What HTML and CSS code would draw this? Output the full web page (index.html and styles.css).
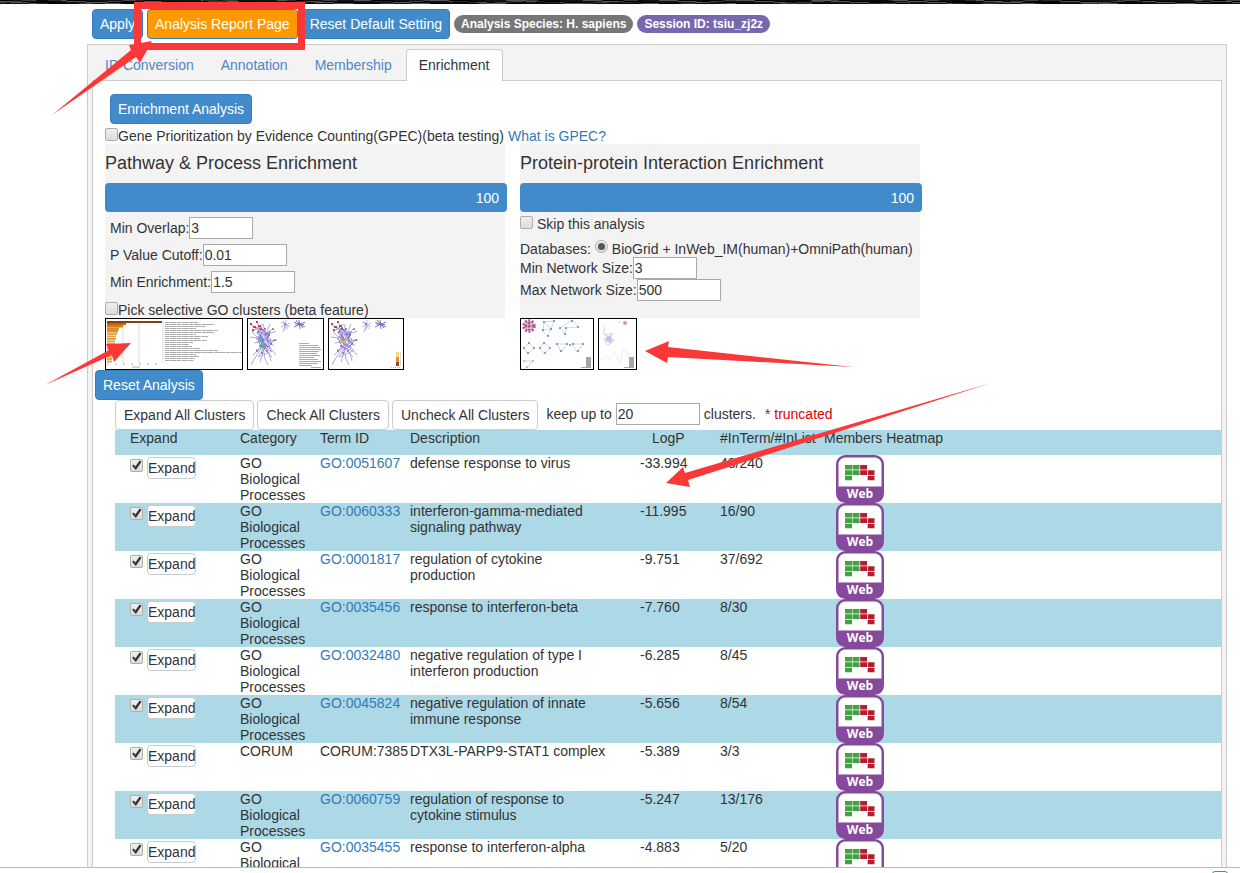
FILE: index.html
```html
<!DOCTYPE html>
<html lang="en">
<head>
<meta charset="utf-8">
<title>Enrichment Analysis</title>
<link rel="stylesheet" href="styles.css">
</head>
<body>
<svg class="defs" width="0" height="0" aria-hidden="true">
  <symbol id="web" viewBox="0 0 48 48">
    <rect x="1.250" y="1.250" width="45.500" height="45.500" rx="8" fill="#fff" stroke="#854a9b" stroke-width="2.500"/>
    <path d="M1 31.500H47V39Q47 47 39 47H9Q1 47 1 39Z" fill="#854a9b"/>
    <path d="M9 10h7v4.500h-7zM16.500 10h7v4.500h-7zM9 15.200h7v4.700h-7zM16.500 15.200h7v4.700h-7zM9 20.700h7v4.600h-7z" fill="#43a343"/>
    <path d="M24.200 10h6.800v4.500h-6.800zM24.200 15.200h6.800v4.700h-6.800zM31.700 15.200h6.800v4.700h-6.800zM31.700 20.700h6.800v4.600h-6.800z" fill="#b81c30"/>
    <text x="24" y="43" text-anchor="middle" class="web-text">Web</text>
  </symbol>
  <symbol id="net" viewBox="0 0 76 50">
    <g fill="none" stroke="#a99ddb" stroke-width=".9">
      <path d="M3 6L20 14L9 18L26 22L12 28L24 32L10 38L18 26L4 13L15 5L22 30L8 20L28 12M12 10L17 40L20 46M6 24L16 22L29 21M14 28L5 42L3 46M16 28L8 31M20 26L28 36M10 4L13 24L24 10M14 14L26 27M5 36L20 22M12 43L16 30L24 38M22 5L16 20L2 18M21 34L23 42M7 9L23 20L13 33"/>
      <path d="M13 8L17 16L22 12L19 22L24 24L18 30L13 27L10 22L15 19L9 14ZM15 10L20 18L14 24L20 28L12 18Z" stroke="#8173c5"/>
      <path d="M33 3L42 8M38 1L37 11M33 8L42 4M35 2L40 10M37 7L35 13" stroke="#b9a9df"/>
      <path d="M46 3L57 8M51 1L52 10M46 8L57 3M48 1L55 9M47 5L56 5.500" stroke="#7464c4"/>
    </g>
    <path d="M9 13h2M16 10h2M20 16h2M14 21h2M11 27h2M22 25h2M18 32h2M26 21h2M24 10h2M13 34h2M8 32h2M50 5h3M36 5h2" stroke="#7767b8" stroke-width="1.500"/>
  </symbol>
</svg>

<div class="banner"></div>
<main class="page">
  <div class="toolbar">
    <button class="btn primary" type="button">Apply</button>
    <button class="btn report" type="button">Analysis Report Page</button>
    <button class="btn primary" type="button">Reset Default Setting</button>
    <span class="badge">Analysis Species: H. sapiens</span>
    <span class="badge session">Session ID: tsiu_zj2z</span>
  </div>
  <section class="tabbox">
    <nav class="tabs">
      <a href="#">ID Conversion</a>
      <a href="#">Annotation</a>
      <a href="#">Membership</a>
      <a href="#" class="active">Enrichment</a>
    </nav>
    <div class="content">
      <div class="start"><button class="btn primary" type="button">Enrichment Analysis</button></div>
      <div class="check gpec"><input type="checkbox" id="gpec"><label for="gpec">Gene Prioritization by Evidence Counting(GPEC)(beta testing)</label><a href="#">What is GPEC?</a></div>
      <div class="panels">
        <section class="column">
          <div class="panel">
            <h2>Pathway &amp; Process Enrichment</h2>
            <div class="bar">100</div>
            <div class="fields">
              <div class="field"><label for="overlap">Min Overlap:</label><input class="box short" id="overlap" value="3"></div>
              <div class="field"><label for="cutoff">P Value Cutoff:</label><input class="box" id="cutoff" value="0.01"></div>
              <div class="field"><label for="enrich">Min Enrichment:</label><input class="box" id="enrich" value="1.5"></div>
            </div>
            <div class="check pick"><input type="checkbox" id="pick"><label for="pick">Pick selective GO clusters (beta feature)</label></div>
          </div>
          <div class="thumbs">
            <svg width="138" height="52" viewBox="0 0 138 52" role="img" aria-label="Bar chart">
              <path d="M18 3V45M34 3V45M58 3V45" stroke="#ddd"/>
              <path d="M2 3H57V5H2Z" fill="#8c3d12"/>
              <path d="M2 5H21V7H2Z" fill="#bd650f"/><path d="M2 7H18V9.500H2Z" fill="#d97c16"/>
              <path d="M2 9.500H14V12H2ZM2 12H13V14.500H2Z" fill="#e18b24"/>
              <path d="M2 16H12M2 18.500H11M2 21H11M2 23.500H10M2 26H10M2 28.500H9M2 31H9M2 33.500H8M2 36H8M2 38.500H8M2 41H7M2 43.500H7" stroke="#e6a646" stroke-width="2"/>
              <path d="M2 46H58" stroke="#aaa" stroke-dasharray="2 6"/><path d="M27 49h8" stroke="#aaa"/>
              <g stroke="#858585" stroke-width="1" stroke-dasharray="4 .5 7 .7">
                <path d="M60 4.500h33M60 6.500h50M60 8.500h41M60 10.500h31M60 12.500h53M60 14.500h50M60 16.500h31M60 18.500h43M60 20.500h35M60 22.500h42M60 24.500h28M60 26.500h24M60 28.500h27M60 30.500h35M60 32.500h53M60 34.500h77M60 36.500h31M60 38.500h34M60 40.500h30M60 42.500h29" opacity=".7"/>
              </g>
              <rect x=".5" y=".5" width="137" height="51" fill="none" stroke="#000"/>
            </svg>
            <svg width="77" height="52" viewBox="0 0 77 52" role="img" aria-label="Network coloured by cluster">
              <use href="#net" x="1" y="1" width="76" height="50"/>
              <path d="M3 6h2M6 9h3M9 4h2M11 8h3M5 12h2M13 11h2" stroke="#db3158" stroke-width="2"/>
              <path d="M11 20l5 4-2 4 5 1" fill="none" stroke="#53a7a1" stroke-width="2"/>
              <path d="M52 25.500h10M52 27.500h19M52 29.500h21M52 31.500h22M52 33.500h20M52 35.500h18M52 37.500h21M52 39.500h15M52 41.500h19M52 43.500h22M52 45.500h19M52 47.500h13M64 49.500h10" stroke="#aaa"/>
              <rect x=".5" y=".5" width="76" height="51" fill="none" stroke="#000"/>
            </svg>
            <svg width="76" height="52" viewBox="0 0 76 52" role="img" aria-label="Network coloured by p-value">
              <use href="#net" x="1" y="1" width="76" height="50"/>
              <path d="M3 6h2M6 9h3M9 4h2M11 8h3M5 12h2M13 11h2" stroke="#944f65" stroke-width="2"/>
              <path d="M12 20l3 4 3-2" fill="none" stroke="#dfb367" stroke-width="2"/>
              <path d="M68 34h3v5h-3z" fill="#f7d77d"/><path d="M68 39h3v5h-3z" fill="#eb9135"/><path d="M68 44h3v4h-3z" fill="#a54120"/>
              <path d="M72.500 34v14M63 49.500h10" stroke="#bbb" stroke-dasharray="1 1"/>
              <rect x=".5" y=".5" width="75" height="51" fill="none" stroke="#000"/>
            </svg>
          </div>
        </section>
        <section class="column">
          <div class="panel">
            <h2>Protein-protein Interaction Enrichment</h2>
            <div class="bar">100</div>
            <div class="check skip"><input type="checkbox" id="skip"><label for="skip">Skip this analysis</label></div>
            <div class="databases"><span>Databases:</span><input type="radio" id="db" name="db" checked><label for="db">BioGrid + InWeb_IM(human)+OmniPath(human)</label></div>
            <div class="field"><label for="minnet">Min Network Size:</label><input class="box short" id="minnet" value="3"></div>
            <div class="field"><label for="maxnet">Max Network Size:</label><input class="box" id="maxnet" value="500"></div>
          </div>
          <div class="thumbs">
            <svg width="74" height="52" viewBox="0 0 74 52" role="img" aria-label="Interaction components">
              <circle cx="9" cy="8" r="5" fill="#dbb5cf"/>
              <g fill="none" stroke="#b3508a" stroke-width="2.500" stroke-dasharray="2 1.500"><circle cx="9" cy="8" r="5.500"/><path d="M5 8h9M9 4v8"/></g>
              <g fill="none" stroke="#b7c5e5" stroke-width=".7"><path d="M24 4L34 3L31 11L23 12ZM24 4L31 11L28 18L22 13M40 10L52 2L58 9L46 10L45 17ZM4 30L9 25L14 30L8 36ZM19 30L25 25L30 30L24 35ZM37 26L47 26L41 34ZM52 26L63 26L57 34ZM3 43L13 43L7 50"/></g>
              <path d="M23 4h2M33 3h2M30 11h2M22 12h2M27 18h2M39 10h2M51 3h2M57 9h2M45 10h2M44 16h2M3 30h2M8 25h2M13 30h2M7 35h2M23 25h2M36 26h2M46 26h2M40 33h2M52 26h2M62 26h2M57 33h2M49 27h2" stroke="#6287a5" stroke-width="1.500"/>
              <path d="M19 30h2M29 30h2M24 35h2" stroke="#ba7299" stroke-width="1.500"/><path d="M3 43h2M12 43h2M6 49h2" stroke="#9dc6a9" stroke-width="1.500"/>
              <path d="M66 39h5v11h-5zM61 49h8v1h-8z" fill="#aaa5a0"/>
              <rect x=".5" y=".5" width="73" height="51" fill="none" stroke="#000"/>
            </svg>
            <svg width="39" height="52" viewBox="0 0 39 52" role="img" aria-label="Interaction network">
              <path d="M5 7l2 5-2 3 5 5 4-5-2 6 5 1-6 3-5-5 3 7 5-2-3-6-5-3 9 0" fill="none" stroke="#c9ccec" stroke-width=".8"/>
              <circle cx="11" cy="21" r="3" fill="#bfc8ea"/><circle cx="27" cy="5" r="2" fill="#d698b4"/><path d="M21 4h2" stroke="#e6c2d1"/>
              <path d="M3 42q4-7 7-2t5-2 5 3 4-3 4-3 3-2" fill="none" stroke="#e4e4e4" stroke-dasharray="2 1"/>
              <path d="M31 39h5v11h-5zM26 49h8v1h-8z" fill="#aaa5a0"/>
              <rect x=".5" y=".5" width="38" height="51" fill="none" stroke="#000"/>
            </svg>
          </div>
        </section>
      </div>
      <div class="reset"><button class="btn primary" type="button">Reset Analysis</button></div>
      <div class="results">
        <div class="actions">
          <button class="btn plain" type="button">Expand All Clusters</button>
          <button class="btn plain" type="button">Check All Clusters</button>
          <button class="btn plain" type="button">Uncheck All Clusters</button>
          <div class="keep"><label for="keep">keep up to</label><input class="box" id="keep" value="20"><span>clusters.</span><span class="warn">* truncated</span></div>
        </div>
        <table>
          <colgroup><col class="c-expand"><col class="c-cat"><col class="c-term"><col class="c-desc"><col class="c-logp"><col class="c-count"><col></colgroup>
          <thead>
            <tr><th class="first">Expand</th><th>Category</th><th>Term ID</th><th>Description</th><th class="logp">LogP</th><th>#InTerm/#InList</th><th class="heat">Members Heatmap</th></tr>
          </thead>
          <tbody>
            <tr><td><div class="pickrow"><input type="checkbox" aria-label="Select GO:0051607" checked><button class="mini" type="button">Expand</button></div></td><td>GO Biological Processes</td><td><a href="#">GO:0051607</a></td><td class="desc">defense response to virus</td><td>-33.994</td><td>43/240</td><td class="icon"><svg role="img" aria-label="Web heatmap"><use href="#web"/></svg></td></tr>
            <tr><td><div class="pickrow"><input type="checkbox" aria-label="Select GO:0060333" checked><button class="mini" type="button">Expand</button></div></td><td>GO Biological Processes</td><td><a href="#">GO:0060333</a></td><td class="desc">interferon-gamma-mediated signaling pathway</td><td>-11.995</td><td>16/90</td><td class="icon"><svg role="img" aria-label="Web heatmap"><use href="#web"/></svg></td></tr>
            <tr><td><div class="pickrow"><input type="checkbox" aria-label="Select GO:0001817" checked><button class="mini" type="button">Expand</button></div></td><td>GO Biological Processes</td><td><a href="#">GO:0001817</a></td><td class="desc">regulation of cytokine production</td><td>-9.751</td><td>37/692</td><td class="icon"><svg role="img" aria-label="Web heatmap"><use href="#web"/></svg></td></tr>
            <tr><td><div class="pickrow"><input type="checkbox" aria-label="Select GO:0035456" checked><button class="mini" type="button">Expand</button></div></td><td>GO Biological Processes</td><td><a href="#">GO:0035456</a></td><td class="desc">response to interferon-beta</td><td>-7.760</td><td>8/30</td><td class="icon"><svg role="img" aria-label="Web heatmap"><use href="#web"/></svg></td></tr>
            <tr><td><div class="pickrow"><input type="checkbox" aria-label="Select GO:0032480" checked><button class="mini" type="button">Expand</button></div></td><td>GO Biological Processes</td><td><a href="#">GO:0032480</a></td><td class="desc">negative regulation of type I interferon production</td><td>-6.285</td><td>8/45</td><td class="icon"><svg role="img" aria-label="Web heatmap"><use href="#web"/></svg></td></tr>
            <tr><td><div class="pickrow"><input type="checkbox" aria-label="Select GO:0045824" checked><button class="mini" type="button">Expand</button></div></td><td>GO Biological Processes</td><td><a href="#">GO:0045824</a></td><td class="desc">negative regulation of innate immune response</td><td>-5.656</td><td>8/54</td><td class="icon"><svg role="img" aria-label="Web heatmap"><use href="#web"/></svg></td></tr>
            <tr><td><div class="pickrow"><input type="checkbox" aria-label="Select CORUM:7385" checked><button class="mini" type="button">Expand</button></div></td><td>CORUM</td><td>CORUM:7385</td><td class="desc">DTX3L-PARP9-STAT1 complex</td><td>-5.389</td><td>3/3</td><td class="icon"><svg role="img" aria-label="Web heatmap"><use href="#web"/></svg></td></tr>
            <tr><td><div class="pickrow"><input type="checkbox" aria-label="Select GO:0060759" checked><button class="mini" type="button">Expand</button></div></td><td>GO Biological Processes</td><td><a href="#">GO:0060759</a></td><td class="desc">regulation of response to cytokine stimulus</td><td>-5.247</td><td>13/176</td><td class="icon"><svg role="img" aria-label="Web heatmap"><use href="#web"/></svg></td></tr>
            <tr><td><div class="pickrow"><input type="checkbox" aria-label="Select GO:0035455" checked><button class="mini" type="button">Expand</button></div></td><td>GO Biological Processes</td><td><a href="#">GO:0035455</a></td><td class="desc">response to interferon-alpha</td><td>-4.883</td><td>5/20</td><td class="icon"><svg role="img" aria-label="Web heatmap"><use href="#web"/></svg></td></tr>
          </tbody>
        </table>
      </div>
    </div>
  </section>
</main>
<footer class="status"><span class="handle"></span></footer>

<svg class="marks" width="1000" height="500" viewBox="0 0 1000 500" aria-hidden="true">
  <rect x="137.500" y="5.500" width="164" height="41" fill="none" stroke="#fb3838" stroke-width="7"/>
  <g fill="#fb3838">
    <path d="M52 115L131 50L129 45L152 41L140 63L136 57Z"/>
    <path d="M45 385L109 350L106 344L131 343L114 362L112 355Z"/>
    <path d="M853 367L668 347L669 341L645 351L667 363L668 357Z"/>
    <path d="M991 383L685 473L683 467L666 483L690 487L688 480Z"/>
  </g>
</svg>
</body>
</html>
```
FILE: styles.css
```css
* { box-sizing: border-box; }

body {
  margin: 0;
  height: 100vh;
  display: flex;
  flex-direction: column;
  overflow: hidden;
  background: #fff;
  color: #333;
  font: 14px/16px "Liberation Sans", Arial, sans-serif;
}

a { color: #337ab7; text-decoration: none; }
button, input { font: inherit; color: inherit; margin: 0; }
.defs { display: none; }

.banner {
  flex: none;
  height: 4px;
  background:
    repeating-linear-gradient(176deg, transparent 0 2px, #6668 2px 3px, transparent 3px 7px),
    repeating-linear-gradient(94deg, transparent 0 37px, #0008 37px 61px, transparent 61px 83px),
    repeating-linear-gradient(3deg, #111 0 2px, #555 2px 3px, #000 3px 4px);
}

.page {
  flex: 1;
  min-height: 0;
  overflow: hidden;
  display: flex;
  flex-direction: column;
  padding: 5px 13px 0 87px;
}

.toolbar {
  flex: none;
  display: flex;
  align-items: center;
  gap: 4px;
  padding: 0 5px;
  margin-bottom: 5px;
}

.btn {
  height: 30px;
  padding: 0 7px;
  border: 1px solid #357ebd;
  border-radius: 4px;
  white-space: nowrap;
}
.primary { background: #428bca; color: #fff; }
.report { background: #f90; color: #fff; }
.plain { padding: 0 8px; background: #fff; border-color: #ccc; }

.badge {
  padding: 1px 7px;
  border-radius: 9px;
  background: #777;
  color: #fff;
  font-size: 12px;
  font-weight: bold;
}
.session { background: #7768ae; }

.tabbox {
  flex: 1;
  display: flex;
  flex-direction: column;
  padding: 4px 4px 0;
  border: 1px solid #ccc;
  border-bottom: 0;
  background: #f3f3f3;
}

.tabs { display: flex; gap: 1px; }
.tabs a {
  padding: 7px 12px;
  border: 1px solid transparent;
  border-bottom: 0;
  border-radius: 4px 4px 0 0;
  color: #4f86c6;
}
.tabs .active {
  position: relative;
  z-index: 1;
  margin-bottom: -1px;
  border-color: #ccc;
  background: #fff;
  color: #333;
}

.content {
  flex: 1;
  border: 1px solid #ccc;
  border-bottom: 0;
  background: #fff;
  padding: 13px 0 0 2px;
}

.start { display: flex; padding-left: 15px; margin-bottom: 4px; }

input[type="checkbox"], input[type="radio"] {
  appearance: none;
  flex: none;
  width: 13px;
  height: 13px;
  border: 1px solid #adadad;
  border-radius: 2px;
  background: linear-gradient(#eee, #dcdcdc);
}
input[type="radio"] { border-radius: 50%; padding: 2px; }
input[type="radio"]::before {
  content: "";
  display: block;
  width: 7px;
  height: 7px;
  border-radius: 50%;
  background: #555;
}
input[type="checkbox"]:checked::before {
  content: "";
  display: block;
  width: 11px;
  height: 11px;
  background: #333;
  clip-path: polygon(10% 52%, 24% 40%, 40% 58%, 78% 4%, 96% 16%, 44% 92%);
}

.check { display: flex; align-items: flex-start; }
.gpec { padding-left: 10px; }
.gpec a { margin-left: 4px; }

.panels { display: flex; gap: 15px; padding-left: 10px; }
.column { width: 400px; }
.panel { height: 174px; background: #f3f3f3; }
.panel h2 {
  margin: 0;
  padding: 9px 0 10px;
  font-size: 18px;
  line-height: 20px;
  font-weight: normal;
}
.bar {
  height: 29px;
  margin-right: -2px;
  padding: 0 8px;
  border-radius: 4px;
  background: #428bca;
  color: #fff;
  line-height: 30px;
  text-align: right;
}
.fields { display: flex; flex-direction: column; gap: 5px; padding: 5px 5px 9px; }
.field { display: flex; align-items: center; }
.box {
  width: 84px;
  height: 22px;
  padding: 0 1px;
  border: 1px solid #a9a9a9;
  background: #fff;
}
.short { width: 64px; }
.skip { gap: 4px; padding: 4px 0; }
.databases { display: flex; gap: 4px; padding: 5px 0 0; white-space: nowrap; }
.databases input { margin-top: -1px; }

.thumbs { display: flex; gap: 4px; }
.reset { display: flex; }

.results { padding-left: 20px; }
.actions { display: flex; gap: 3px; }
.keep { display: flex; align-items: center; gap: 4px; height: 28px; padding-left: 5px; }
.warn { margin-left: 5px; color: #d00; }

table { width: 100%; table-layout: fixed; border-collapse: collapse; }
.c-expand { width: 125px; }
.c-cat { width: 80px; }
.c-term { width: 90px; }
.c-desc { width: 230px; }
.c-logp { width: 80px; }
.c-count { width: 100px; }
th, td { padding: 0; text-align: left; vertical-align: top; font-weight: normal; }
thead tr { height: 25px; }
thead tr, tbody tr:nth-child(even) { background: #add8e6; }
th.first { padding-left: 15px; }
th.logp { padding-left: 12px; }
th.heat { padding-left: 4px; }
.desc { padding-right: 30px; }
.pickrow { display: flex; gap: 4px; padding: 2px 0 0 15px; }
.pickrow input { margin-top: 2px; }
.mini {
  height: 22px;
  padding: 0;
  border: 1px solid #ccc;
  border-radius: 4px;
  background: #fff;
}
.icon { padding-left: 16px; }
.icon svg { display: block; width: 48px; height: 48px; }
.web-text { font: bold 12px "Open Sans", sans-serif; fill: #fff; }

.status {
  flex: none;
  height: 6px;
  padding: 3px 12px 0 0;
  border-top: 1px solid #bbb;
  overflow: hidden;
}
.handle {
  display: block;
  width: 16px;
  height: 8px;
  margin-left: auto;
  border: 1px solid #2aa36b;
  border-radius: 3px;
}

/* Annotation arrows lie over the page */
.marks { position: absolute; left: 0; top: 0; pointer-events: none; z-index: 2; }
```
